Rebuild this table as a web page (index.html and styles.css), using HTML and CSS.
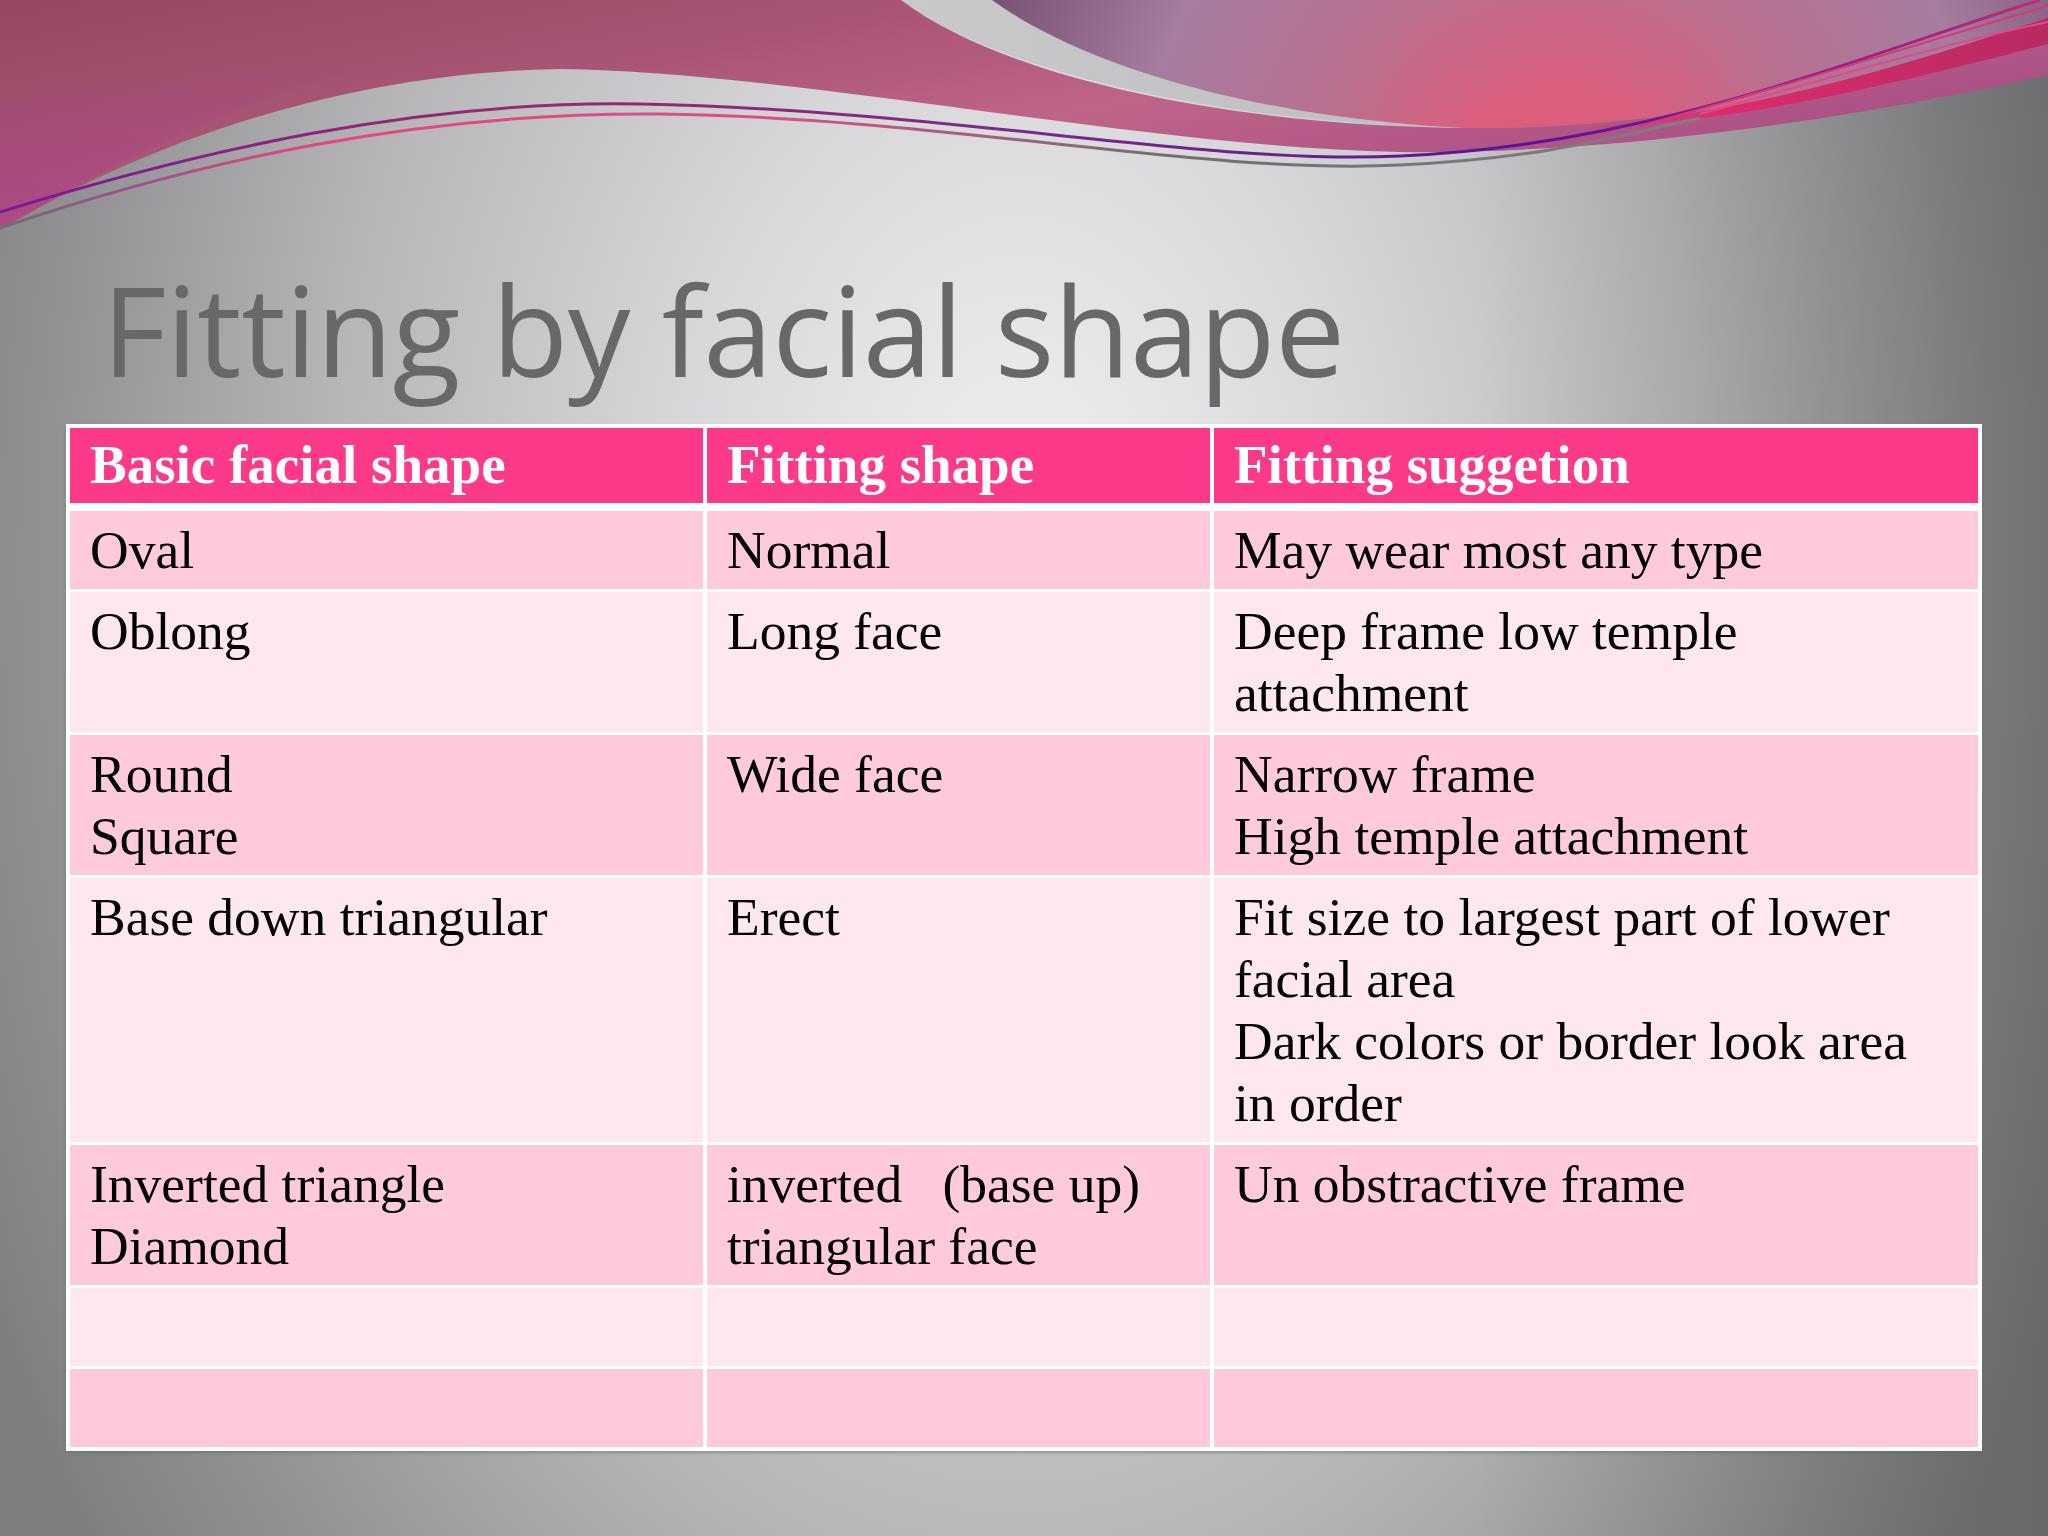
FILE: index.html
```html
<!DOCTYPE html>
<html lang="en">
<head>
<meta charset="utf-8">
<title>Fitting by facial shape</title>
<link rel="stylesheet" href="styles.css">
</head>
<body>
<div class="slide">
  <svg class="deco" width="2048" height="260" viewBox="0 0 2048 260" aria-hidden="true">
    <defs>
      <linearGradient id="gL" x1="0" y1="0" x2="1" y2="0.6">
        <stop offset="0" stop-color="#974760"/>
        <stop offset="0.35" stop-color="#aa5577"/>
        <stop offset="0.6" stop-color="#bf6488"/>
        <stop offset="1" stop-color="#a44a86"/>
      </linearGradient>
      <linearGradient id="gLeft" x1="0" y1="0" x2="0" y2="1">
        <stop offset="0" stop-color="#a63a8c" stop-opacity="0"/>
        <stop offset="1" stop-color="#a63a8c" stop-opacity="0.85"/>
      </linearGradient>
      <radialGradient id="gR" cx="1560" cy="200" r="600" gradientUnits="userSpaceOnUse">
        <stop offset="0" stop-color="#e35a78"/>
        <stop offset="0.2" stop-color="#d8607e"/>
        <stop offset="0.42" stop-color="#b87090"/>
        <stop offset="0.7" stop-color="#a67c9f"/>
        <stop offset="1" stop-color="#7a5273"/>
      </radialGradient>
      <linearGradient id="gSw" x1="0" y1="0" x2="1" y2="0">
        <stop offset="0" stop-color="#c9c9cb"/>
        <stop offset="1" stop-color="#bdbdbf"/>
      </linearGradient>
      <linearGradient id="gHot" x1="1550" y1="0" x2="2048" y2="0" gradientUnits="userSpaceOnUse">
        <stop offset="0" stop-color="#e0306e" stop-opacity="0"/>
        <stop offset="0.35" stop-color="#dc2c6a"/>
        <stop offset="1" stop-color="#b82a62"/>
      </linearGradient>
      <linearGradient id="gLine1" x1="0" y1="0" x2="2048" y2="0" gradientUnits="userSpaceOnUse">
        <stop offset="0" stop-color="#7a1a9a"/>
        <stop offset="0.25" stop-color="#9a2a6a"/>
        <stop offset="0.5" stop-color="#7a2a8a"/>
        <stop offset="0.75" stop-color="#5a1494"/>
        <stop offset="1" stop-color="#c02a7a"/>
      </linearGradient>
      <linearGradient id="gLine2" x1="0" y1="0" x2="1700" y2="0" gradientUnits="userSpaceOnUse">
        <stop offset="0" stop-color="#6e6e70"/>
        <stop offset="0.08" stop-color="#a0508a"/>
        <stop offset="0.2" stop-color="#e8457c"/>
        <stop offset="0.45" stop-color="#d8508a"/>
        <stop offset="0.7" stop-color="#707072"/>
        <stop offset="1" stop-color="#808082"/>
      </linearGradient>
    </defs>
    <path d="M901,0 L992,0 C1100,75 1300,128 1510,128 C1260,130 1010,80 901,0 Z" fill="url(#gSw)"/>
    <path d="M992,0 L2048,0 L2048,28 C1900,80 1750,128 1540,130 C1310,130 1100,78 992,0 Z" fill="url(#gR)"/>
    <path d="M0,0 L901,0 C1010,82 1250,130 1500,128 C1700,126 1900,72 2048,38 L2048,75 C1850,120 1600,155 1400,152 C1150,148 800,72 560,69 C350,72 150,140 0,230 Z" fill="url(#gL)"/>
    <path d="M0,100 L400,60 C250,90 120,160 0,230 Z" fill="url(#gLeft)" opacity="0.6"/>
    <path d="M1560,131 C1750,122 1900,82 2048,44 L2048,18 C1900,66 1760,112 1560,131 Z" fill="url(#gHot)"/>
    <path d="M0,212 C200,150 420,100 640,104 C950,110 1200,165 1400,156 C1650,145 1850,60 2040,0" fill="none" stroke="url(#gLine1)" stroke-width="3"/>
    <path d="M0,228 C200,160 420,112 660,114 C950,118 1200,175 1400,165 C1550,158 1620,135 1700,118" fill="none" stroke="url(#gLine2)" stroke-width="3"/>
    <path d="M1640,126 C1800,82 1950,34 2048,6" fill="none" stroke="#d8357c" stroke-width="2"/>
    <path d="M1700,114 C1850,72 1960,40 2048,22" fill="none" stroke="#e04a8a" stroke-width="2"/>
  </svg>

  <h1 class="title">Fitting by facial shape</h1>

  <div class="table-frame">
    <table class="fit-table">
      <colgroup>
        <col class="c1">
        <col class="c2">
        <col class="c3">
      </colgroup>
      <thead>
        <tr>
          <th>Basic facial shape</th>
          <th>Fitting shape</th>
          <th>Fitting suggetion</th>
        </tr>
      </thead>
      <tbody>
        <tr class="odd">
          <td>Oval</td>
          <td>Normal</td>
          <td>May wear most any type</td>
        </tr>
        <tr class="even">
          <td>Oblong</td>
          <td>Long face</td>
          <td>Deep frame low temple<br>attachment</td>
        </tr>
        <tr class="odd">
          <td>Round<br>Square</td>
          <td>Wide face</td>
          <td>Narrow frame<br>High temple attachment</td>
        </tr>
        <tr class="even">
          <td>Base down triangular</td>
          <td>Erect</td>
          <td>Fit size to largest part of lower<br>facial area<br>Dark colors or border look area<br>in order</td>
        </tr>
        <tr class="odd">
          <td>Inverted triangle<br>Diamond</td>
          <td>inverted&nbsp;&nbsp; (base up)<br>triangular face</td>
          <td>Un obstractive frame</td>
        </tr>
        <tr class="even">
          <td>&nbsp;</td>
          <td>&nbsp;</td>
          <td>&nbsp;</td>
        </tr>
        <tr class="odd">
          <td>&nbsp;</td>
          <td>&nbsp;</td>
          <td>&nbsp;</td>
        </tr>
      </tbody>
    </table>
  </div>
</div>
</body>
</html>
```

FILE: styles.css
```css
html, body {
  margin: 0;
  padding: 0;
}

body {
  width: 2048px;
  height: 1536px;
  overflow: hidden;
  background: #8a8a8c;
}

.slide {
  position: relative;
  width: 2048px;
  height: 1536px;
  overflow: hidden;
  box-sizing: border-box;
  padding-top: 254px;
  background:
    linear-gradient(to right, rgba(50, 50, 54, 0) 0%, rgba(50, 50, 54, 0) 72%, rgba(50, 50, 54, 0.28) 100%),
    radial-gradient(ellipse 1150px 1700px at 1020px 560px,
      #f2f2f4 0%,
      #d8d8da 30%,
      #b6b6b8 60%,
      #919193 85%,
      #7e7e80 100%);
}

.deco {
  position: absolute;
  top: 0;
  left: 0;
  display: block;
}

.title {
  position: relative;
  margin: 0 0 20px 102px;
  font-family: "Open Sans", "Noto Sans", sans-serif;
  font-weight: 400;
  font-size: 125px;
  line-height: 150px;
  height: 150px;
  color: #68686b;
  letter-spacing: -0.5px;
  white-space: nowrap;
}

.table-frame {
  position: relative;
  margin-left: 66px;
  width: 1916px;
  background: #ffffff;
  padding: 1px 0;
  box-shadow: 0 2px 3px rgba(90, 100, 95, 0.45);
}

.fit-table {
  width: 1916px;
  table-layout: fixed;
  border-collapse: separate;
  border-spacing: 4px 3px;
  font-family: "Liberation Serif", "Times New Roman", serif;
  color: #000000;
}

.c1 { width: 633px; }
.c2 { width: 503px; }
.c3 { width: 764px; }

.fit-table th {
  background: #fd3a89;
  color: #ffffff;
  font-weight: 700;
  font-size: 55px;
  line-height: 62px;
  text-align: left;
  padding: 6px 20px 7px 20px;
  border-bottom: 5px solid #ffffff;
  vertical-align: top;
  white-space: nowrap;
}

.fit-table td {
  font-size: 53.5px;
  line-height: 62px;
  padding: 8px 20px;
  vertical-align: top;
  white-space: nowrap;
}

.odd td {
  background: #ffcadb;
}

.even td {
  background: #ffe7ee;
}
```
